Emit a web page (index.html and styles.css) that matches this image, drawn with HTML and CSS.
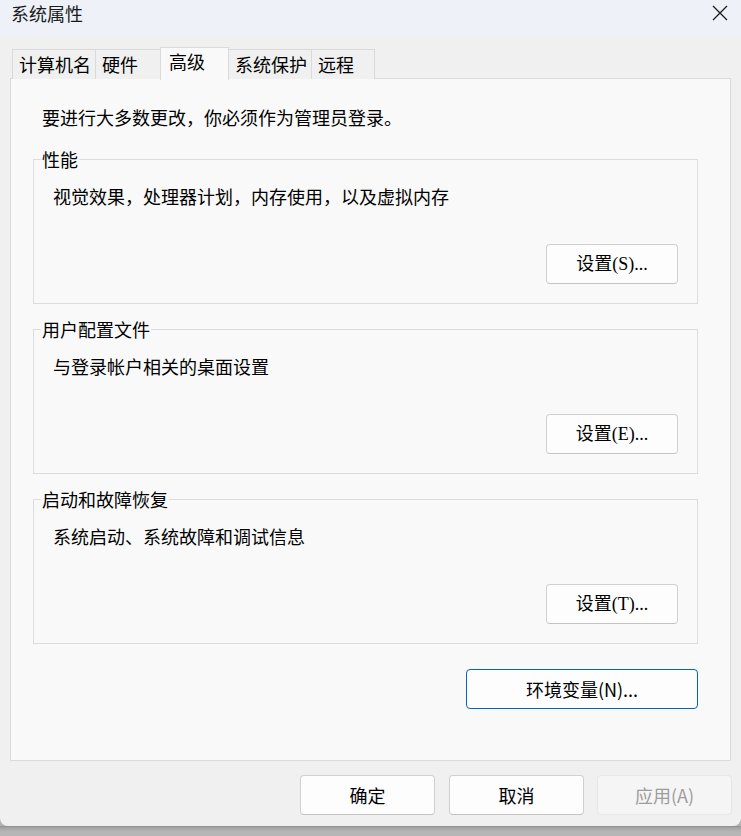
FILE: index.html
```html
<!DOCTYPE html>
<html lang="zh-CN">
<head>
<meta charset="utf-8">
<title>系统属性</title>
<link rel="stylesheet" href="styles.css">
</head>
<body>
<div class="window">
  <div class="titlebar">
    <span class="title">系统属性</span>
    <span class="close" aria-label="关闭">
      <svg width="16" height="16" viewBox="0 0 16 16"><path d="M1 1 L15 15 M15 1 L1 15" stroke="#1b1b1b" stroke-width="1.3" fill="none"/></svg>
    </span>
  </div>
  <div class="content">
    <div class="tabs">
      <div class="tab w1">计算机名</div>
      <div class="tab w2">硬件</div>
      <div class="tab active w3">高级</div>
      <div class="tab w4">系统保护</div>
      <div class="tab w5">远程</div>
    </div>
    <div class="panel">
      <p class="intro">要进行大多数更改，你必须作为管理员登录。</p>
      <fieldset class="group">
        <legend>性能</legend>
        <p class="desc">视觉效果，处理器计划，内存使用，以及虚拟内存</p>
        <div class="row"><button class="btn set">设置(S)...</button></div>
      </fieldset>
      <fieldset class="group">
        <legend>用户配置文件</legend>
        <p class="desc">与登录帐户相关的桌面设置</p>
        <div class="row"><button class="btn set">设置(E)...</button></div>
      </fieldset>
      <fieldset class="group">
        <legend>启动和故障恢复</legend>
        <p class="desc">系统启动、系统故障和调试信息</p>
        <div class="row"><button class="btn set">设置(T)...</button></div>
      </fieldset>
      <div class="envrow"><button class="btn env">环境变量(N)...</button></div>
    </div>
    <div class="footer">
      <button class="btn foot">确定</button>
      <button class="btn foot">取消</button>
      <button class="btn foot disabled">应用(A)</button>
    </div>
  </div>
</div>
<div class="desktop"></div>
</body>
</html>
```

FILE: styles.css
```css
html, body {
  margin: 0;
  padding: 0;
}
body {
  width: 741px;
  height: 836px;
  overflow: hidden;
  background: #b3b3b3;
  font-family: "Noto Sans CJK SC", "Noto Sans", sans-serif;
  font-size: 18px;
  color: #000;
}
.window {
  height: 826px;
  background: #f0f0f0;
  border-radius: 0 0 8px 8px;
  overflow: hidden;
}
.desktop {
  height: 10px;
  background: linear-gradient(#8e8e8e 0, #a6a6a6 2px, #b6b6b6 6px);
}
.titlebar {
  height: 35px;
  background: #eef2f8;
  display: flex;
  align-items: center;
  justify-content: space-between;
  padding: 0 13px 0 11px;
}
.title {
  line-height: 24px;
  margin-top: -9px;
  color: #1a1a1a;
}
.close {
  display: flex;
  margin-top: -9px;
}
.content {
  padding: 12px 10px 0 10px;
}
.tabs {
  display: flex;
  align-items: flex-end;
  height: 32px;
  padding-left: 2px;
  position: relative;
  z-index: 1;
}
.tab {
  box-sizing: border-box;
  height: 30px;
  border: 1px solid #dadada;
  border-bottom: none;
  border-right: none;
  background: #f0f0f0;
  line-height: 28px;
  padding-left: 6px;
  white-space: nowrap;
}
.tab.w5 { border-right: 1px solid #dadada; }
.w1 { width: 83px; }
.w2 { width: 65px; }
.w3 { width: 69px; }
.w4 { width: 82px; }
.w5 { width: 64px; }
.tab.active {
  height: 33px;
  background: #f9f9f9;
  line-height: 26px;
  padding-left: 8px;
  border-right: 1px solid #dadada;
  margin-bottom: -1px;
}
.tab.active + .tab { border-left: none; }
.panel {
  box-sizing: border-box;
  height: 683px;
  margin-top: -1px;
  background: #f9f9f9;
  border: 1px solid #dadada;
  padding: 27px 32px 0 22px;
}
.intro {
  margin: 0 0 20px 9px;
  line-height: 22px;
}
.group {
  margin: 0 0 14px 0;
  padding: 0 19px 19px 19px;
  border: 1px solid #dcdcdc;
  min-width: 0;
}
.group legend {
  margin-left: -12px;
  padding: 0 1px;
  line-height: 22px;
}
.desc {
  margin: 15px 0 0 0;
  line-height: 22px;
}
.row {
  display: flex;
  justify-content: flex-end;
  margin-top: 37px;
}
.btn {
  box-sizing: border-box;
  font-family: "Noto Sans CJK SC", "Noto Sans", sans-serif;
  font-size: 18px;
  color: #000;
  background: #fdfdfd;
  border: 1px solid #d0d0d0;
  border-bottom-color: #c4c4c4;
  border-radius: 4px;
  padding: 0;
  height: 40px;
  line-height: 38px;
}
.btn.set {
  width: 132px;
  font-family: "Liberation Serif", "Noto Sans CJK SC", serif;
}
.group:last-of-type {
  margin-bottom: 0;
}
.envrow {
  display: flex;
  justify-content: flex-end;
  margin-top: 25px;
}
.btn.env {
  width: 232px;
  height: 40px;
  border: 1px solid #0067c0;
}
.footer {
  display: flex;
  justify-content: flex-end;
  gap: 14px;
  padding-top: 14px;
  margin-right: -1px;
}
.btn.foot {
  width: 135px;
  height: 40px;
}
.btn.foot.disabled {
  margin-left: -1px;
  background: #f5f5f5;
  border-color: #e6e6e6;
  color: #9d9d9d;
}
```
